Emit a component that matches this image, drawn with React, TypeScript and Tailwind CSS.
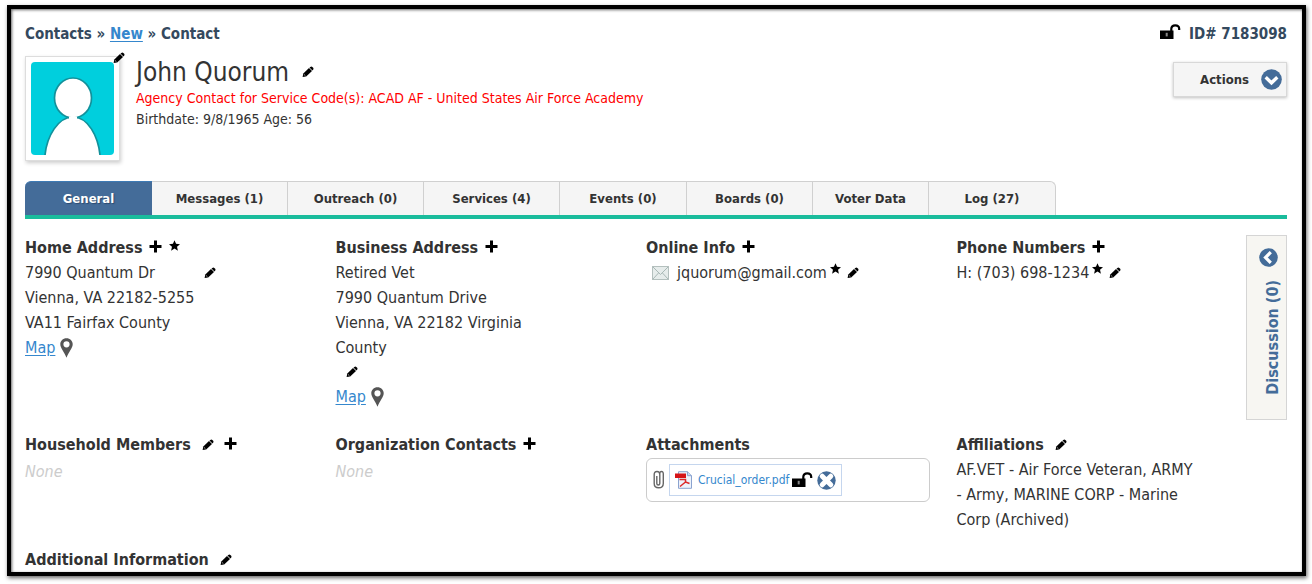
import type { ReactNode } from "react";

function Pencil({ label = "Edit" }: { label?: string }) {
  return (
    <button type="button" aria-label={label} className="inline-flex shrink-0 cursor-pointer text-black">
      <svg width="12" height="12" viewBox="0 0 12 12" fill="currentColor" aria-hidden="true">
        <path d="M.600 11 1.300 7.500 7 2 10 5 4.200 10.400Z" />
        <path d="M7.500 1.600 8.800.700Q9.600.300 10.300.900L11.200 1.800Q11.800 2.500 11.300 3.200L10.400 4.400Z" />
        <path d="M1.900 8.300 3.500 9.900" stroke="#fff" strokeWidth=".600" />
      </svg>
    </button>
  );
}

function Plus({ label = "Add" }: { label?: string }) {
  return (
    <button type="button" aria-label={label} className="inline-flex shrink-0 cursor-pointer pb-[2px] text-black">
      <svg width="13" height="13" viewBox="0 0 13 13" fill="currentColor" aria-hidden="true">
        <path d="M5 .500H8V5H12.500V8H8V12.500H5V8H.500V5H5Z" />
      </svg>
    </button>
  );
}

function Star() {
  return (
    <svg width="11" height="11" viewBox="0 0 24 24" fill="#000" className="shrink-0" aria-hidden="true">
      <path d="M12 .500 15.400 8.300 24 9.100 17.500 14.800 19.400 23.300 12 18.800 4.600 23.300 6.500 14.800 0 9.100 8.600 8.300Z" />
    </svg>
  );
}

function OpenLock() {
  return (
    <svg width="21" height="16" viewBox="0 0 21 16" className="shrink-0" aria-hidden="true">
      <path d="M11.300 8V5Q11.300 1.300 15.200 1.300T19.200 4.800V6" fill="none" stroke="#000" strokeWidth="2.200" />
      <rect x="0" y="6.500" width="13.500" height="8.500" fill="#000" />
      <rect x="5.700" y="8.800" width="2" height="3.600" fill="#888" />
    </svg>
  );
}

function Pin() {
  return (
    <svg width="13" height="20" viewBox="0 0 13 20" className="shrink-0" aria-hidden="true">
      <path
        fillRule="evenodd"
        fill="#555"
        d="M6.500.300C2.900.300.300 3 .300 6.300.300 10 4 13.500 6.500 19.700 9 13.500 12.700 10 12.700 6.300 12.700 3 10.100.300 6.500.300ZM6.500 3.200A3.100 3.100 0 1 1 6.500 9.400 3.100 3.100 0 0 1 6.500 3.200Z"
      />
    </svg>
  );
}

function MapLink() {
  return (
    <div className="flex items-center gap-[5px]">
      <a href="#map" className="text-[#3587cd] underline underline-offset-2">Map</a>
      <Pin />
    </div>
  );
}

function Heading({ children, icons }: { children: ReactNode; icons?: ReactNode }) {
  return (
    <div className="flex items-center gap-[7px]">
      <h2 className="font-bold">{children}</h2>
      {icons}
    </div>
  );
}

function Avatar() {
  return (
    <div className="relative border border-[#ddd] bg-white p-[5px] shadow-[1px_2px_4px_rgba(0,0,0,0.2)]">
      <svg width="83" height="93" viewBox="0 0 83 93" className="block" role="img" aria-label="Contact photo">
        <rect width="83" height="93" rx="4" fill="#00cfdd" />
        <path d="M14 93C16 74 27 55 42 55S67 74 69 93" fill="#fff" stroke="#12919b" strokeWidth="1.700" />
        <ellipse cx="42" cy="36" rx="18.500" ry="20" fill="#fff" stroke="#12919b" strokeWidth="1.700" />
        <path d="M38 54.500H46V57H38Z" fill="#fff" />
      </svg>
      <span className="absolute -top-[5px] -right-[6px] flex">
        <Pencil label="Edit photo" />
      </span>
    </div>
  );
}

const tabs = [
  { label: "General", width: "w-[127px]" },
  { label: "Messages (1)", width: "w-[136px]" },
  { label: "Outreach (0)", width: "w-[136px]" },
  { label: "Services (4)", width: "w-[136px]" },
  { label: "Events (0)", width: "w-[127px]" },
  { label: "Boards (0)", width: "w-[126px]" },
  { label: "Voter Data", width: "w-[116px]" },
  { label: "Log (27)", width: "w-[127px]" },
];

function Tabs() {
  return (
    <nav className="flex border-b-4 border-[#1abc9c]">
      {tabs.map((tab, i) => (
        <button
          key={tab.label}
          type="button"
          className={
            "h-[34px] cursor-pointer border-t text-[13px] font-bold first:rounded-tl-md last:rounded-tr-md " +
            tab.width +
            (i === 0
              ? " border-[#3d7ab5] bg-[#446c99] text-white [text-shadow:1px_1px_1px_#2a4a70]"
              : " border-r border-[#d0d0d0] bg-[#f5f5f5] text-[#333]")
          }
        >
          {tab.label}
        </button>
      ))}
    </nav>
  );
}

function Attachment() {
  return (
    <div className="mt-[1px] mr-[6px] flex h-[44px] items-center gap-[4px] rounded-md border border-[#ccc] pl-[6px]">
      <svg width="12" height="20" viewBox="0 0 12 20" fill="none" stroke="#666" strokeWidth="1.400" aria-hidden="true">
        <path d="M3.800 6V13.500Q3.800 15 5.300 15T6.800 13.500V4.500Q6.800 1.500 4 1.500T1.200 4.500V13.500Q1.200 17.800 5.700 17.800T10.300 13.500V4Q10.300 1.500 8.500 1.500T6.800 4" />
      </svg>
      <div className="flex h-[32px] items-center border border-[#c5d6ee] px-[5px]">
        <svg width="18" height="18" viewBox="0 0 18 18" aria-hidden="true">
          <path d="M3.500.700H12.500L16.500 4.700V17.300H3.500Z" fill="#edf3fc" stroke="#8ba3cf" />
          <path d="M12.500.700V4.700H16.500" fill="#cbd9f0" stroke="#8ba3cf" />
          <rect x="0" y="2.500" width="11" height="4.500" fill="#d51317" />
          <path d="M4.500 8.500H10.500V11L14.500 12.500M10.500 11 5 15.500" fill="none" stroke="#dc2a2a" strokeWidth="1.500" />
        </svg>
        <a href="#file" className="ml-[5px] text-[12px] text-[#3587cd]">Crucial_order.pdf</a>
        <span className="ml-[3px] flex"><OpenLock /></span>
        <button type="button" aria-label="Remove attachment" className="ml-[4px] cursor-pointer">
          <svg width="19" height="19" viewBox="0 0 19 19" aria-hidden="true">
            <circle cx="9.500" cy="9.500" r="9.200" fill="#446c99" />
            <path d="M5.200 5.200 13.800 13.800M13.800 5.200 5.200 13.800" stroke="#fff" strokeWidth="5" strokeLinecap="round" />
          </svg>
        </button>
      </div>
    </div>
  );
}

function Discussion() {
  return (
    <button
      type="button"
      className="flex h-[185px] w-[41px] shrink-0 cursor-pointer flex-col items-center border border-[#d5d5d5] bg-[#f7f6f2] pt-[12px] text-[#446c99]"
    >
      <svg width="19" height="19" viewBox="0 0 19 19" className="mr-[-4px] shrink-0" aria-hidden="true">
        <circle cx="9.500" cy="9.500" r="9.300" fill="currentColor" />
        <path d="M11.800 4.200 6.500 9.500 11.800 14.800" fill="none" stroke="#fff" strokeWidth="3.200" />
      </svg>
      <span className="mt-[13px] mr-[-12px] rotate-180 text-[16px] leading-[20px] font-bold whitespace-nowrap [writing-mode:vertical-rl]">
        Discussion (0)
      </span>
    </button>
  );
}

export default function App() {
  return (
    <div className="bg-white pt-[5px] pr-[6px] pb-[8px] pl-[7px] font-['DejaVu_Sans_Condensed','Noto_Sans',sans-serif] text-[#333]">
      <main className="border-4 border-black pt-[14px] pr-[15px] pl-[14px] shadow-[1px_2px_4px_rgba(0,0,0,0.6),inset_1px_1px_3px_rgba(0,0,0,0.6)]">
        <header>
          <div className="flex items-center justify-between text-[15px] leading-[22px] font-bold text-[#34495e]">
            <nav>
              Contacts » <a href="#new" className="text-[#3587cd] underline underline-offset-2">New</a> » Contact
            </nav>
            <div className="flex items-center gap-[8px]">
              <span className="flex pb-[4px]"><OpenLock /></span>
              <span>ID# 7183098</span>
            </div>
          </div>
          <div className="mt-[11px] flex items-start">
            <Avatar />
            <div className="ml-4 flex-1">
              <div className="flex items-center gap-[13px]">
                <h1 className="text-[26px] leading-[32px]">John Quorum</h1>
                <Pencil label="Edit name" />
              </div>
              <p className="text-[14px] leading-[21px] text-[#f00]">
                Agency Contact for Service Code(s): ACAD AF - United States Air Force Academy
              </p>
              <p className="text-[14px] leading-[21px]">Birthdate: 9/8/1965 Age: 56</p>
            </div>
            <button
              type="button"
              className="mt-[6px] flex h-[35px] w-[114px] cursor-pointer items-center justify-end gap-[12px] border border-[#d8d8d8] bg-[#f5f5f5] pr-[4px] text-[13px] font-bold shadow-[0_1px_3px_rgba(0,0,0,0.25)]"
            >
              Actions
              <svg width="21" height="21" viewBox="0 0 21 21" aria-hidden="true">
                <circle cx="10.500" cy="10.500" r="10.300" fill="#446c99" />
                <path d="M4.700 8.300 10.500 13.800 16.300 8.300" fill="none" stroke="#fff" strokeWidth="3.400" />
              </svg>
            </button>
          </div>
        </header>

        <div className="mt-[20px]">
          <Tabs />
        </div>

        <div className="mt-[16px] flex items-start">
          <div className="grid flex-1 grid-cols-4 gap-x-[21px] text-[16px] leading-[25px]">
            <section className="min-h-[197px]">
              <Heading icons={<><Plus /><span className="flex pb-[5px]"><Star /></span></>}>Home Address</Heading>
              <div className="flex gap-[10px]">
                <address className="not-italic">
                  7990 Quantum Dr<br />Vienna, VA 22182-5255<br />VA11 Fairfax County
                </address>
                <span className="flex h-[25px] items-center"><Pencil /></span>
              </div>
              <MapLink />
            </section>
            <section>
              <Heading icons={<Plus />}>Business Address</Heading>
              <address className="max-w-[200px] not-italic">
                Retired Vet<br />7990 Quantum Drive<br />Vienna, VA 22182 Virginia County
              </address>
              <div className="flex h-[24px] items-center pl-[10px]"><Pencil /></div>
              <MapLink />
            </section>
            <section>
              <Heading icons={<Plus />}>Online Info</Heading>
              <div className="flex items-center pl-[6px]">
                <svg width="17" height="14" viewBox="0 0 17 14" aria-hidden="true">
                  <rect x=".5" y=".5" width="16" height="13" fill="#e6eceb" stroke="#b4c0be" />
                  <path d="M1 1 8.500 8.500 16 1M1 13 6.500 7M16 13 10.500 7" fill="none" stroke="#a9b8b6" />
                </svg>
                <span className="ml-[8px]">jquorum@gmail.com</span>
                <span className="ml-[3px] flex h-[20px] items-start"><Star /></span>
                <span className="ml-[6px] flex"><Pencil /></span>
              </div>
            </section>
            <section>
              <Heading icons={<Plus />}>Phone Numbers</Heading>
              <div className="flex items-center">
                <span>H: (703) 698-1234</span>
                <span className="ml-[3px] flex h-[20px] items-start"><Star /></span>
                <span className="ml-[6px] flex"><Pencil /></span>
              </div>
            </section>
            <section className="min-h-[115px]">
              <Heading icons={<span className="ml-[4px] flex items-center gap-[10px]"><Pencil /><Plus /></span>}>Household Members</Heading>
              <p className="pt-[2px] text-[#ccc] italic">None</p>
            </section>
            <section>
              <Heading icons={<Plus />}>Organization Contacts</Heading>
              <p className="pt-[2px] text-[#ccc] italic">None</p>
            </section>
            <section>
              <Heading>Attachments</Heading>
              <Attachment />
            </section>
            <section>
              <Heading icons={<span className="ml-[4px] flex"><Pencil /></span>}>Affiliations</Heading>
              <p className="max-w-[245px]">
                AF.VET - Air Force Veteran, ARMY - Army, MARINE CORP - Marine Corp (Archived)
              </p>
            </section>
            <section className="col-span-4">
              <Heading icons={<span className="ml-[4px] flex"><Pencil /></span>}>Additional Information</Heading>
            </section>
          </div>
          <Discussion />
        </div>
      </main>
    </div>
  );
}
